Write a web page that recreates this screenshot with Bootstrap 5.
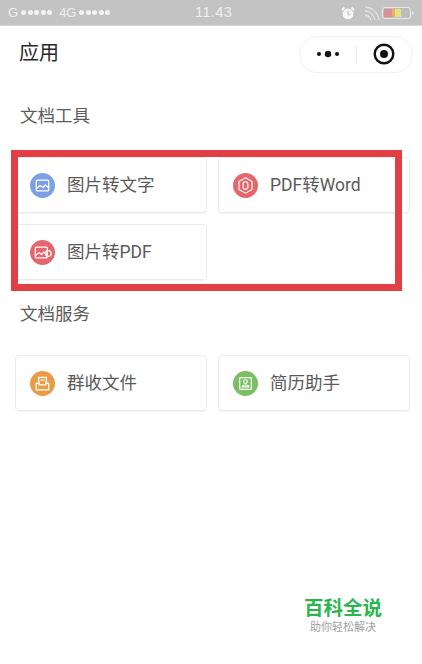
<!DOCTYPE html>
<html lang="zh">
  <head>
    <meta charset="utf-8" />
    <title>应用</title>
    <link
      rel="stylesheet"
      href="https://cdn.jsdelivr.net/npm/bootstrap@5.3.0/dist/css/bootstrap.min.css"
    />
    <style>
      html, body { height: 664px; overflow: hidden; }
      body { font-family: Roboto, "Noto Sans CJK SC", sans-serif; background: #fff; color: #4a4a4a; }
      .status-bar { height: 26px; background: #c3c3c3; color: #efefef; padding: 0 8px; font-family: "Liberation Sans", sans-serif; font-size: 13px; border-bottom: 1px solid #d6d6d6; }
      .status-left { width: 187px; }
      .signal-dots { gap: 1.500px; margin: 0 3px; }
      .signal-dot { width: 5px; height: 5px; background: #f2f2f2; }
      .status-time { font-size: 14.5px; letter-spacing: .4px; width: 36px; }
      .status-right { margin-left: auto; gap: 1px; }
      .app-head { height: 56px; padding: 0 9px 0 19px; }
      .app-title { font-size: 20px; color: #2a2a2a; line-height: 1; padding-bottom: 2px; }
      .capsule { width: 114px; height: 37px; border: 1px solid #efefef; border-radius: 19px; }
      .capsule-part { width: 56px; }
      .capsule-line { width: 1px; height: 19px; background: #ececec; }
      .section-title { font-size: 17.5px; line-height: 24px; color: #5c5c5c; padding-left: 20px; margin: 0; font-weight: 400; }
      .first-title { margin-top: 22px; }
      .tool-wrap { position: relative; padding: 29px 12px 22px 15px; }
      .tool-grid { display: grid; grid-template-columns: 192px 192px; gap: 11px; }
      .tool-card { height: 56px; border: 1px solid #ebebeb; border-radius: 4px; padding-left: 14px; gap: 12px; font-size: 17.5px; color: #5a5a5a; box-shadow: 0 1px 1px #f4f4f4; }
      .tool-icon { width: 25px; height: 25px; flex: none; }
      .mark-box { position: absolute; left: 11px; top: 22px; width: 391px; height: 141px; border: 7px solid #e23f44; pointer-events: none; }
      .second-wrap { padding-bottom: 0; }
      .brand-mark { position: absolute; left: 304px; top: 599px; width: 78px; text-align: center; line-height: 1; }
      .brand-name { font-size: 19.5px; font-weight: 700; color: #2ab54e; white-space: nowrap; }
      .brand-sub { font-size: 11px; color: #a0a0a0; margin-top: 3px; white-space: nowrap; }
    </style>
  </head>

  <body>
    <div class="status-bar d-flex align-items-center">
      <div class="status-left d-flex align-items-center">
        <span>G</span>
        <span class="signal-dots d-flex">
          <i class="signal-dot rounded-circle"></i><i class="signal-dot rounded-circle"></i><i class="signal-dot rounded-circle"></i><i class="signal-dot rounded-circle"></i><i class="signal-dot rounded-circle"></i>
        </span>
        <span class="ms-1">4G</span>
        <span class="signal-dots d-flex">
          <i class="signal-dot rounded-circle"></i><i class="signal-dot rounded-circle"></i><i class="signal-dot rounded-circle"></i><i class="signal-dot rounded-circle"></i><i class="signal-dot rounded-circle"></i>
        </span>
      </div>
      <div class="status-time">11.43</div>
      <div class="status-right d-flex align-items-center">
        <svg width="14" height="14" viewBox="0 0 16 16">
          <circle cx="8" cy="9" r="6.200" fill="#f6f6f6" />
          <path d="M8 5.500V9l2.400 1.200" stroke="#bdbdbd" stroke-width="1.300" fill="none" />
          <path d="M1 4.500 4 1.800M15 4.500 12 1.800" stroke="#f6f6f6" stroke-width="2.200" />
        </svg>
        <svg class="ms-2" width="17" height="16" viewBox="0 0 17 16" fill="none" stroke="#e4e4e4" stroke-width="1.300">
          <path d="M1 2c7 0 13 6 14 13M1 6c5 0 9 4 10 9M1 10c2.500 0 5 2.500 6 5" />
        </svg>
        <svg width="32" height="12" viewBox="0 0 32 12">
          <rect x=".5" y=".5" width="28" height="11" rx="2.500" fill="#bdbdbd" stroke="#e8e8e8" />
          <rect x="2" y="2" width="8" height="8" fill="#dc9090" />
          <rect x="10" y="2" width="3" height="8" fill="#e8b070" />
          <rect x="13" y="2" width="6" height="8" fill="#e8e27a" />
          <path d="M30 4l2 2-2 2z" fill="#e8e8e8" />
        </svg>
      </div>
    </div>

    <div class="app-head d-flex justify-content-between align-items-center">
      <div class="app-title">应用</div>
      <div class="capsule d-flex align-items-center">
        <div class="capsule-part d-flex justify-content-center">
          <svg width="24" height="10" viewBox="0 0 24 10">
            <circle cx="3" cy="5" r="2" fill="#111" />
            <circle cx="12" cy="5" r="3.200" fill="#111" />
            <circle cx="21" cy="5" r="2" fill="#111" />
          </svg>
        </div>
        <div class="capsule-line"></div>
        <div class="capsule-part d-flex justify-content-center">
          <svg width="22" height="22" viewBox="0 0 22 22">
            <circle cx="11" cy="11" r="9.300" fill="none" stroke="#111" stroke-width="2.400" />
            <circle cx="11" cy="11" r="4" fill="#111" />
          </svg>
        </div>
      </div>
    </div>

    <h2 class="section-title first-title">文档工具</h2>
    <div class="tool-wrap">
      <div class="tool-grid">
        <div class="tool-card d-flex align-items-center">
          <svg class="tool-icon" viewBox="0 0 26 26">
            <circle cx="13" cy="13" r="13" fill="#7c9fe6" />
            <rect x="6.500" y="7.500" width="13" height="11" rx="1" fill="none" stroke="#fff" stroke-width="1.300" />
            <path d="M7 16l3.500-3 3 2 2.500-2.500 3 2.500" fill="none" stroke="#fff" stroke-width="1.300" />
          </svg>
          <span>图片转文字</span>
        </div>
        <div class="tool-card d-flex align-items-center">
          <svg class="tool-icon" viewBox="0 0 26 26">
            <circle cx="13" cy="13" r="13" fill="#e5666c" />
            <path d="M13 5l6.800 3.900v8.200L13 21l-6.800-3.900V8.900z" fill="none" stroke="#fff" stroke-width="1.200" />
            <path d="M10.500 14.500v-3a2.500 2.500 0 0 1 5 0M15.500 11.500v3a2.500 2.500 0 0 1-5 0" fill="none" stroke="#fff" stroke-width="1.200" />
          </svg>
          <span>PDF转Word</span>
        </div>
        <div class="tool-card d-flex align-items-center">
          <svg class="tool-icon" viewBox="0 0 26 26">
            <circle cx="13" cy="13" r="13" fill="#e5666c" />
            <rect x="5.500" y="7.500" width="12.500" height="11" rx="1" fill="none" stroke="#fff" stroke-width="1.300" />
            <path d="M6 16l3.500-3 2.500 2 2.500-2.500 3 2.500" fill="none" stroke="#fff" stroke-width="1.300" />
            <circle cx="19" cy="14" r="3" fill="none" stroke="#fff" stroke-width="1.300" />
          </svg>
          <span>图片转PDF</span>
        </div>
      </div>
      <div class="mark-box"></div>
    </div>

    <h2 class="section-title">文档服务</h2>
    <div class="tool-wrap second-wrap">
      <div class="tool-grid">
        <div class="tool-card d-flex align-items-center">
          <svg class="tool-icon" viewBox="0 0 26 26">
            <circle cx="13" cy="13" r="13" fill="#e99b45" />
            <path d="M6.500 13v6.500h13V13l-3-1v2.500h-7V12z" fill="none" stroke="#fff" stroke-width="1.300" />
            <path d="M9 13V6.500h8V13M11 9.500h4" fill="none" stroke="#fff" stroke-width="1.300" />
          </svg>
          <span>群收文件</span>
        </div>
        <div class="tool-card d-flex align-items-center">
          <svg class="tool-icon" viewBox="0 0 26 26">
            <circle cx="13" cy="13" r="13" fill="#7bbf62" />
            <rect x="7" y="7" width="12" height="12" fill="none" stroke="#fff" stroke-width="1.200" />
            <circle cx="13" cy="11" r="2" fill="none" stroke="#fff" stroke-width="1.100" />
            <path d="M9.500 16.500c.5-2.500 6.500-2.500 7 0z" fill="none" stroke="#fff" stroke-width="1.100" />
          </svg>
          <span>简历助手</span>
        </div>
      </div>
    </div>

    <div class="brand-mark">
      <div class="brand-name">百科全说</div>
      <div class="brand-sub">助你轻松解决</div>
    </div>

    <script src="https://cdn.jsdelivr.net/npm/bootstrap@5.3.0/dist/js/bootstrap.bundle.min.js"></script>
  </body>
</html>
